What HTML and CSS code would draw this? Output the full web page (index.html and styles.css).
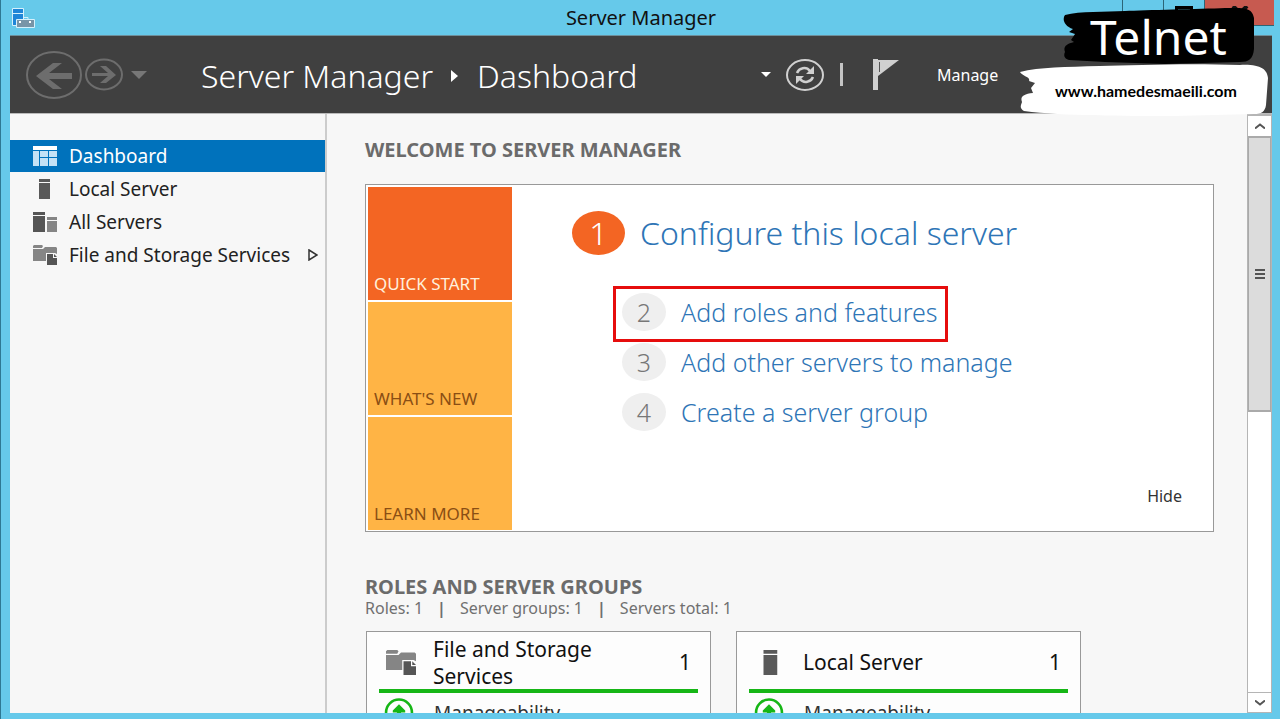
FILE: index.html
```html
<!DOCTYPE html>
<html lang="en">
<head>
<meta charset="utf-8">
<title>Server Manager</title>
<link rel="stylesheet" href="styles.css">
</head>
<body>
<svg class="defs" aria-hidden="true">
  <symbol id="server" viewBox="0 0 24 20"><path fill="#595959" d="M6 0h11v3H6zM6 4h11v16H6z"/></symbol>
  <symbol id="servers" viewBox="0 0 24 20"><path fill="#555" d="M0 0h12v3H0zM0 4h12v16H0z"/><path fill="#858585" d="M14 5h10v3H14zM14 9h10v11H14z"/></symbol>
  <symbol id="storage" viewBox="0 0 24 20"><path fill="#858585" d="M0 1l1-1h8l1 1-1 2H0zM0 4h10l2-2h11l1 1v6l-2-1h-9v8H0z"/><path fill="#555" d="M14 9h6v4h4v7H14z"/><path fill="#555" d="M21 9l3 3h-3z"/></symbol>
  <symbol id="up" viewBox="0 0 28 28"><circle cx="14" cy="14" r="12.500" fill="none" stroke="#16b616" stroke-width="2.500"/><path fill="#16b616" d="M14 6l6 6v2h-4v8h-4v-8H8v-2z"/></symbol>
</svg>
<div class="window">
  <header class="titlebar">
    <svg class="app-icon" viewBox="0 0 24 20" aria-hidden="true"><path fill="#1f86d8" stroke="#d5f1fc" d="M.5.500h11v17H.500zM.5 5.500h11"/><path fill="#7895a8" stroke="#d5f1fc" d="M4.500 11.500h18v8h-18z"/><path fill="none" stroke="#d5f1fc" d="M11 9.500h5v2"/><path fill="#fff" d="M7 13h2v2H7zM17 13h2v2h-2z"/></svg>
    <span class="window-title">Server Manager</span>
    <div class="controls">
      <button aria-label="Minimize"></button>
      <button aria-label="Maximize"><svg viewBox="0 0 18 14"><path fill="none" stroke="#000" stroke-width="3" d="M1.500 1.500h15v10h-15z"/></svg></button>
      <button class="close" aria-label="Close"><svg viewBox="0 0 18 14"><path stroke="#111" stroke-width="4" d="M2 0l14 14M16 0L2 14"/></svg></button>
    </div>
  </header>
  <div class="toolbar">
    <button class="back" aria-label="Back"><svg viewBox="0 0 56 48"><ellipse cx="28" cy="24" rx="27" ry="23" fill="none" stroke="#6d6d6d" stroke-width="2"/><path fill="#6d6d6d" d="M10 25l17-13h9L23 22h23v6H23l13 10h-9z"/></svg></button>
    <button class="forward" aria-label="Forward"><svg viewBox="0 0 38 33"><ellipse cx="19" cy="16.500" rx="18" ry="15" fill="none" stroke="#6d6d6d" stroke-width="2"/><path fill="#6d6d6d" d="M31 17L21 25h-6l8-7H7v-3h16l-8-7h6z"/></svg></button>
    <button class="history" aria-label="History"><svg viewBox="0 0 16 8"><path fill="#777" d="M0 0h16L8 8z"/></svg></button>
    <nav class="crumbs" aria-label="Breadcrumb"><span>Server Manager</span><svg viewBox="0 0 8 12"><path fill="#fff" d="M0 0l7 6-7 6z"/></svg><span>Dashboard</span></nav>
    <div class="tools">
      <button class="drop" aria-label="More"><svg viewBox="0 0 10 5"><path fill="#fff" d="M0 0h10L5 5z"/></svg></button>
      <button class="refresh" aria-label="Refresh"><svg viewBox="0 0 40 34"><ellipse cx="20" cy="17" rx="18" ry="15" fill="none" stroke="#d0d0d0" stroke-width="2"/><path fill="none" stroke="#d0d0d0" stroke-width="2.500" d="M12 15c2-5 9-7 13-2M28 19c-2 5-9 7-13 2"/><path fill="#d0d0d0" d="M29 8v8h-8zM11 26v-8h8z"/></svg></button>
      <span class="divider"></span>
      <button class="flag" aria-label="Notifications"><svg viewBox="0 0 26 31"><path fill="#d0d0d0" d="M0 0h5v31H0zM5 1h21L5 17z"/><path stroke="#555" d="M6.500 3v10"/></svg></button>
      <button class="manage">Manage</button>
    </div>
  </div>
  <div class="body">
    <nav class="sidebar" aria-label="Pages">
      <a href="#" class="active"><svg viewBox="0 0 24 20"><path fill="#fff" d="M0 0h24v4H0z"/><path fill="#c4e2f6" d="M0 5h6v15H0zM7 5h8v6H7zM16 5h8v6h-8zM7 12h8v8H7zM16 12h8v8h-8z"/></svg>Dashboard</a>
      <a href="#"><svg><use href="#server"/></svg>Local Server</a>
      <a href="#"><svg><use href="#servers"/></svg>All Servers</a>
      <a href="#"><svg><use href="#storage"/></svg>File and Storage Services<svg class="expand" viewBox="0 0 10 12"><path fill="none" stroke="#333" stroke-width="1.500" d="M1 1l8 5-8 5z"/></svg></a>
    </nav>
    <main class="content">
      <h2>WELCOME TO SERVER MANAGER</h2>
      <section class="welcome">
        <div class="tiles">
          <button class="tile selected">QUICK START</button>
          <button class="tile">WHAT'S NEW</button>
          <button class="tile">LEARN MORE</button>
        </div>
        <div class="steps">
          <a href="#" class="step primary"><span class="num">1</span>Configure this local server</a>
          <a href="#" class="step marked"><span class="num">2</span>Add roles and features</a>
          <a href="#" class="step"><span class="num">3</span>Add other servers to manage</a>
          <a href="#" class="step"><span class="num">4</span>Create a server group</a>
          <button class="hide">Hide</button>
        </div>
      </section>
      <h2 class="roles-title">ROLES AND SERVER GROUPS</h2>
      <p class="summary"><span>Roles: 1</span><b>|</b><span>Server groups: 1</span><b>|</b><span>Servers total: 1</span></p>
      <div class="cards">
        <article class="card">
          <div class="card-head"><svg><use href="#storage"/></svg><h3>File and Storage Services</h3><span>1</span></div>
          <div class="card-row"><svg><use href="#up"/></svg>Manageability</div>
        </article>
        <article class="card">
          <div class="card-head"><svg><use href="#server"/></svg><h3>Local Server</h3><span>1</span></div>
          <div class="card-row"><svg><use href="#up"/></svg>Manageability</div>
        </article>
      </div>
    </main>
    <div class="scrollbar">
      <button aria-label="Scroll up"><svg viewBox="0 0 10 6"><path fill="none" stroke="#555" stroke-width="2" d="M0 5.500l5-4 5 4"/></svg></button>
      <div class="thumb"><svg viewBox="0 0 10 10"><path stroke="#555" stroke-width="2" d="M0 1h10M0 5h10M0 9h10"/></svg></div>
      <button class="down" aria-label="Scroll down"><svg viewBox="0 0 10 6"><path fill="none" stroke="#555" stroke-width="2" d="M0 .5l5 4 5-4"/></svg></button>
    </div>
  </div>
</div>
<aside class="brand">
  <svg viewBox="0 0 250 108" aria-hidden="true">
    <path d="M45 7C60 3 85 4 105 3S180 1 205 0s27 2 29 10v31c-1 10-5 13-14 13l-75 2-60-2-36-2c-6-2-5-6-4-8-2-5 1-8 9-10l-3-2 4-6-6-2 4-3c-9-3-11-10-8-14z"/>
    <path fill="#fff" d="M0 64c20-5 45-5 80-6s90-3 140-1c20-1 27 4 28 13l-2 27c-1 7-5 9-12 9l-80 2c-50 0-110 0-150-5-5-3-3-6-2-9-2-5 1-8 11-9l-2-5 4-5-6-2c2-4-7-5-9-9z"/>
  </svg>
  <span class="brand-name">Telnet</span>
  <span class="brand-url">www.hamedesmaeili.com</span>
</aside>
</body>
</html>
```
FILE: styles.css
```css
* { box-sizing: border-box; }
body {
  margin: 0;
  height: 100vh;
  overflow: hidden;
  background: #fff;
  color: #222;
  font: 19px/24px "Noto Sans", "Open Sans", sans-serif;
}
button { border: 0; padding: 0; background: none; font: inherit; color: inherit; }
a { color: inherit; text-decoration: none; }
h2, h3, p { margin: 0; }
svg { display: block; flex: none; }
.defs { position: absolute; width: 0; height: 0; }

.window {
  height: calc(100vh - 1px);
  display: flex;
  flex-direction: column;
  padding: 0 8px 6px 9px;
  background: #66c9ea;
  border-left: 1px solid #2e7893;
}
.titlebar {
  flex: none;
  height: 35px;
  display: grid;
  grid-template-columns: 1fr auto 1fr;
  align-items: center;
  color: #111;
}
.app-icon { width: 24px; height: 20px; margin-left: 2px; }
.window-title { font-size: 20px; line-height: 34px; }
.controls { justify-self: end; align-self: start; display: flex; height: 26px; margin-right: -2px; }
.controls button { width: 41px; padding-top: 6px; border-left: 1px solid #2c6577; border-bottom: 1px solid #2c6577; display: flex; align-items: flex-start; justify-content: center; }
.controls .close { width: 70px; background: #c75a50; }
.controls svg { width: 18px; height: 14px; }

.toolbar {
  flex: none;
  height: 79px;
  display: flex;
  align-items: center;
  padding-left: 16px;
  background: #404040;
  color: #fff;
  border-top: 1px solid #6d8f9b;
  border-bottom: 1px solid #bbb;
}
.back svg { width: 56px; height: 48px; }
.forward { margin-left: 3px; }
.forward svg { width: 38px; height: 33px; }
.history { margin-left: 8px; }
.history svg { width: 16px; height: 8px; }
.crumbs { flex: 1; display: flex; align-items: center; gap: 18px; margin-left: 54px; padding-top: 2px; font-size: 32px; font-weight: 300; line-height: 40px; }
.crumbs svg { width: 8px; height: 12px; }
.tools { display: flex; align-items: center; width: 511px; font-size: 16px; }
.drop svg { width: 10px; height: 5px; }
.refresh { margin-left: 14px; }
.refresh svg { width: 40px; height: 34px; }
.divider { width: 3px; height: 23px; margin-left: 15px; background: #c4c4c4; }
.flag { margin-left: 30px; }
.flag svg { width: 26px; height: 31px; }
.manage { margin-left: 38px; }

.body { flex: 1; min-height: 0; display: flex; background: #f7f7f7; }
.sidebar { flex: none; width: 317px; padding-top: 26px; border-right: 2px solid #ccc; }
.sidebar a { display: flex; align-items: center; gap: 12px; height: 33px; padding-left: 23px; white-space: nowrap; }
.sidebar a.active { height: 32px; background: #0072bc; color: #fff; }
.sidebar svg { width: 24px; height: 20px; }
.sidebar .expand { width: 10px; height: 12px; margin-left: 6px; }

.content { flex: 1; min-width: 0; overflow: hidden; padding: 24px 33px 0 38px; }
h2 { font-size: 20px; line-height: 24px; font-weight: 700; color: #6b6b6b; }
.welcome { display: flex; margin-top: 22px; padding: 2px 2px 1px; background: #fff; border: 1px solid #999; }
.tiles { display: grid; grid-template-rows: repeat(3, 113px); gap: 2px; width: 144px; }
.tile { display: flex; align-items: flex-end; padding: 0 6px 4px; font-size: 17px; text-align: left; background: #ffb445; color: #8a4e14; }
.tile.selected { background: #f36523; color: #fff0dc; }
.steps { flex: 1; display: flex; flex-direction: column; align-items: flex-start; padding: 24px 29px 0 60px; color: #2e75b6; }
.step { display: flex; align-items: center; gap: 15px; margin-left: 50px; height: 50px; font-size: 25px; line-height: 32px; font-weight: 300; }
.num { display: flex; align-items: center; justify-content: center; width: 44px; height: 38px; border-radius: 50%; background: #efefef; color: #777; }
.step.primary { height: 44px; margin-left: 0; font-size: 32px; }
.primary .num { width: 53px; height: 44px; background: #f36523; color: #fff; }
.step.marked { height: 56px; margin: 31px 0 -5px 41px; padding: 0 7px 4px 6px; border: 3px solid #e60d0d; }
.hide { align-self: flex-end; margin-top: 47px; font-size: 16px; color: #333; }

.roles-title { margin-top: 43px; }
.summary { display: flex; gap: 14px; font-size: 16px; line-height: 19px; color: #707070; }
.cards { display: flex; gap: 25px; margin: 13px 0 0 1px; }
.card { width: 345px; height: 200px; padding: 0 12px; background: #fdfdfd; border: 1px solid #999; color: #111; }
.card-head { display: flex; align-items: center; height: 61px; padding: 4px 7px 0; border-bottom: 4px solid #16b616; font-size: 21px; line-height: 27px; }
.card-head svg { width: 30px; height: 25px; }
.card h3 { flex: 1; margin-left: 17px; padding-right: 60px; font-size: 21px; font-weight: 400; }
.card-row { display: flex; align-items: center; gap: 20px; padding: 5px; font-size: 19px; color: #333; }
.card-row svg { width: 30px; height: 29px; }

.scrollbar { flex: none; width: 25px; display: flex; flex-direction: column; background: #fff; border: 1px solid #b5b5b5; border-top-width: 2px; }
.scrollbar button { height: 20px; display: flex; align-items: center; justify-content: center; }
.scrollbar button svg { width: 10px; height: 6px; }
.scrollbar .down { margin-top: auto; border-top: 1px solid #b5b5b5; }
.thumb { height: 276px; display: flex; align-items: center; justify-content: center; background: #dcdcdc; border: 2px solid #aaa; border-width: 2px 1px; }
.thumb svg { width: 10px; height: 10px; }

.brand { position: absolute; top: 8px; right: 10px; width: 250px; height: 108px; }
.brand svg { position: absolute; width: 100%; height: 100%; }
.brand span { position: absolute; white-space: nowrap; }
.brand-name { left: 70px; top: 0; font: 48px/58px "Noto Sans", sans-serif; color: #fff; }
.brand-url { left: 35px; top: 72px; font: 700 16px/22px Lato, sans-serif; color: #000; }
```
